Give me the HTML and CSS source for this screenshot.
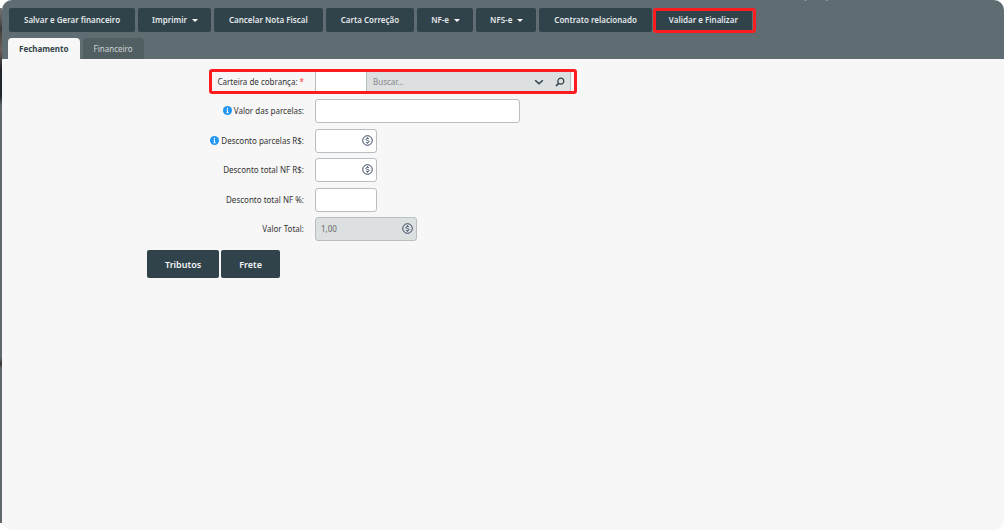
FILE: index.html
```html
<!DOCTYPE html>
<html lang="pt-BR">
<head>
<meta charset="utf-8">
<title>Fechamento</title>
<link rel="stylesheet" href="styles.css">
</head>
<body>
<svg class="sprite" aria-hidden="true">
  <symbol id="info" viewBox="0 0 16 16"><circle cx="8" cy="8" r="8" fill="#2196f3"/><path d="M8 3.2v2M6.3 7.2H8v5M6.2 12.2h3.8" fill="none" stroke="#fff" stroke-width="1.8"/></symbol>
  <symbol id="coin" viewBox="0 0 20 20"><circle cx="10" cy="10" r="8.7" fill="none" stroke="#34425e" stroke-width="1.8"/><path d="M12.8 7.3C12.2 6.4 11.2 6.1 10 6.1c-1.7 0-2.8.7-2.8 1.9 0 2.8 5.7 1.2 5.7 4 0 1.2-1.2 1.9-2.9 1.9-1.3 0-2.4-.4-3-1.3M10 4.3v1.800M10 13.900v1.800" fill="none" stroke="#34425e" stroke-width="1.7"/></symbol>
</svg>
<div class="edge"></div>
<main class="panel">
  <header class="header">
    <div class="caption">Faturamento (saída)</div>
    <nav class="toolbar">
      <button class="btn">Salvar e Gerar financeiro</button>
      <button class="btn btn-menu">Imprimir <span class="caret"></span></button>
      <button class="btn">Cancelar Nota Fiscal</button>
      <button class="btn">Carta Correção</button>
      <button class="btn btn-menu">NF-e <span class="caret"></span></button>
      <button class="btn btn-menu">NFS-e <span class="caret"></span></button>
      <button class="btn">Contrato relacionado</button>
      <button class="btn btn-marked">Validar e Finalizar</button>
    </nav>
    <div class="tabs" role="tablist">
      <button class="tab tab-active" role="tab" aria-selected="true">Fechamento</button>
      <button class="tab" role="tab" aria-selected="false">Financeiro</button>
    </div>
  </header>
  <form class="form">
    <div class="pair">
      <div class="field field-marked">
        <label class="label" for="carteira">Carteira de cobrança: <span class="required">*</span></label>
        <div class="lookup">
          <input class="input code" id="carteira" type="text">
          <div class="search">
            <input class="query" type="text" placeholder="Buscar..." aria-label="Buscar carteira">
            <button class="icon-btn" type="button" aria-label="Abrir lista"><svg class="icon" viewBox="0 0 10 10"><path d="M1.2 3.2L5 6.8l3.8-3.6" fill="none" stroke="#2f4048" stroke-width="1.5"/></svg></button>
            <button class="icon-btn" type="button" aria-label="Pesquisar"><svg class="icon" viewBox="0 0 10 10"><circle cx="5.8" cy="4.2" r="3" fill="none" stroke="#2f4048" stroke-width="1.2"/><path d="M3.6 6.4L1 9" stroke="#2f4048" stroke-width="1.6"/></svg></button>
          </div>
        </div>
      </div>
      <div class="field">
        <label class="label" for="parcelas"><svg class="info"><use href="#info"/></svg> Valor das parcelas:</label>
        <input class="input wide" id="parcelas" type="text">
      </div>
    </div>
    <div class="pair">
      <div class="field">
        <label class="label" for="descparc"><svg class="info"><use href="#info"/></svg> Desconto parcelas R$:</label>
        <div class="money"><input class="input" id="descparc" type="text"><svg class="coin"><use href="#coin"/></svg></div>
      </div>
      <div class="field">
        <label class="label" for="descnf">Desconto total NF R$:</label>
        <div class="money"><input class="input" id="descnf" type="text"><svg class="coin"><use href="#coin"/></svg></div>
      </div>
    </div>
    <div class="pair">
      <div class="field">
        <label class="label" for="descpct">Desconto total NF %:</label>
        <div class="money"><input class="input" id="descpct" type="text"></div>
      </div>
      <div class="field">
        <label class="label" for="total">Valor Total:</label>
        <div class="money money-total"><input class="input" id="total" type="text" value="1,00" disabled><svg class="coin"><use href="#coin"/></svg></div>
      </div>
    </div>
    <div class="actions">
      <button class="action" type="button">Tributos</button>
      <button class="action" type="button">Frete</button>
    </div>
  </form>
</main>
</body>
</html>
```
FILE: styles.css
```css
*, *::before, *::after { box-sizing: border-box; }
body {
  margin: 0;
  min-height: 100vh;
  display: flex;
  background: #fff;
  font-family: "Noto Sans", "Open Sans", sans-serif;
  font-size: 8px;
  color: #333;
}
button, input { font: inherit; margin: 0; }
button { border: 0; cursor: pointer; }
.sprite { position: absolute; width: 0; height: 0; }
.edge {
  flex: none;
  width: 2px;
  margin: 8px 0;
  background: linear-gradient(#777, #3c3c3c 4%, #705f55 8%, #20262b 12%, #20262b 17%, #5f696c 19%, #5f696c 68%, #333 69%, #5f696c 70%);
}
.panel {
  flex: 1;
  margin-bottom: 1px;
  background: #f7f7f7;
  border-radius: 10px;
  overflow: hidden;
}
.header { position: relative; padding: 8px 7px 0; background: #5f6c71; }
.caption {
  position: absolute;
  top: -9px;
  left: 751px;
  line-height: 12px;
  color: #d5dadc;
}
.toolbar { display: flex; gap: 3px; }
.btn {
  position: relative;
  display: flex;
  align-items: center;
  height: 24px;
  padding: 0 15px 2px;
  border-radius: 2px;
  background: #31434a;
  color: #e3e8ea;
  font-weight: 600;
  white-space: nowrap;
}
.btn-menu { padding: 0 13px 2px 14px; }
.caret {
  margin: 2px 0 0 5px;
  border: 3px solid transparent;
  border-top-color: #fff;
  border-bottom: 0;
}
.btn-marked { padding: 0 14px 2px; }
.btn-marked::after, .field-marked::after {
  content: "";
  position: absolute;
  border: 3px solid #fd1d20;
  border-radius: 3px;
  pointer-events: none;
}
.btn-marked::after { inset: 0 -4px -1px -2px; }
.tabs { display: flex; gap: 3px; margin: 6px 0 0 -1px; }
.tab {
  height: 21px;
  padding: 0 11px;
  border-radius: 4px 4px 0 0;
  background: #515e62;
  color: #d0d5d7;
}
.tab-active { background: #f7f7f7; color: #31434a; font-weight: 700; }
.form { padding-top: 11px; }
.pair { display: grid; gap: 5px; margin-bottom: 6px; }
.field {
  position: relative;
  display: grid;
  grid-template-columns: 302px 1fr;
  column-gap: 11px;
  align-items: center;
}
.field-marked::after { inset: -1px auto 0 207px; width: 368px; }
.label {
  display: flex;
  justify-content: flex-end;
  align-items: center;
  gap: 2px;
  padding-bottom: 2px;
}
.required { color: #f33; }
.info { width: 9px; height: 9px; }
.input {
  width: 100%;
  height: 24px;
  padding: 0 5px 2px;
  border: 1px solid #b8bfc2;
  border-radius: 3px;
  background: #fff;
  color: #333;
}
.input:disabled { background: #dce0e1; color: #666; }
.wide { width: 205px; }
.lookup { display: flex; width: 256px; }
.code { width: 52px; border-radius: 2px 0 0 2px; }
.search {
  flex: 1;
  display: flex;
  border: 1px solid #b8bfc2;
  border-left: 0;
  background: #dce0e1;
}
.query { flex: 1; min-width: 0; padding: 0 6px 2px; border: 0; background: none; color: #777; }
.query::placeholder { color: #888; }
.icon-btn { display: grid; place-items: center; width: 21px; padding: 0; background: none; }
.icon { width: 10px; height: 10px; }
.money { position: relative; width: 62px; }
.money-total { width: 102px; }
.coin { position: absolute; top: 6px; right: 4px; width: 11px; height: 11px; }
.actions { display: flex; gap: 2px; padding: 3px 0 0 145px; }
.action {
  height: 28px;
  padding: 0 18px;
  border-radius: 2px;
  background: #31434a;
  color: #f4f6f6;
  font-size: 9px;
  font-weight: 600;
}
```
